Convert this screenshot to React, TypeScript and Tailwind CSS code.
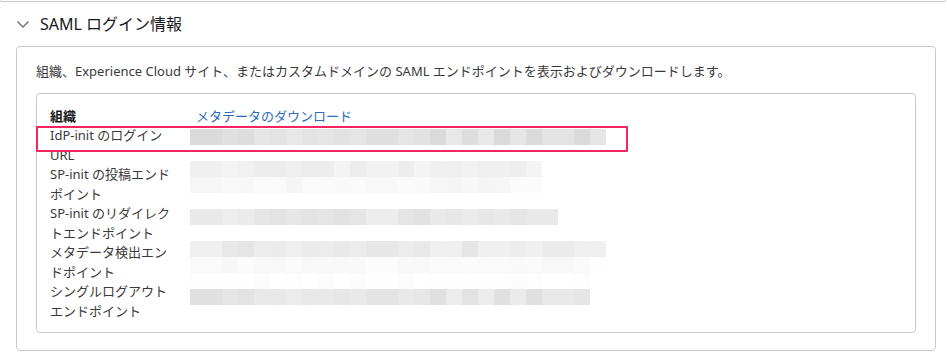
import React from "react";

const FONT = '"Noto Sans", "Noto Sans CJK JP", sans-serif';

const LABELS: string[][] = [
  ["IdP-init のログイン", "URL"],
  ["SP-init の投稿エンド", "ポイント"],
  ["SP-init のリダイレク", "トエンドポイント"],
  ["メタデータ検出エン", "ドポイント"],
  ["シングルログアウト", "エンドポイント"],
];

// redacted values: one row of 16px mosaic cells per entry [cells, base grey, spread]
const MOSAIC: [number, number, number][] = [
  [26, 218, 14],
  [0, 255, 0],
  [22, 236, 8],
  [22, 245, 6],
  [0, 255, 0],
  [23, 226, 12],
  [0, 255, 0],
  [26, 228, 12],
  [26, 247, 5],
  [26, 252, 3],
  [25, 224, 12],
];

function shade(r: number, c: number, base: number, spread: number) {
  const n = ((r * 37 + c * 53 + ((c * c) % 11) * 7) % 10) / 9;
  const v = Math.min(255, Math.round(base + n * spread));
  return `rgb(${v},${v},${v})`;
}

function Redacted() {
  return (
    <svg width={416} height={176} className="block">
      {MOSAIC.map(([cells, base, spread], r) =>
        Array.from({ length: cells }).map((_, c) => (
          <rect
            key={`${r}-${c}`}
            x={c * 16}
            y={r * 16}
            width={16}
            height={16}
            fill={c === cells - 1 ? shade(r, c, base + 6, spread / 2) : shade(r, c, base, spread)}
          />
        ))
      )}
    </svg>
  );
}

export default function App() {
  return (
    <div className="w-[947px] h-[357px] bg-white text-[#3a3a3a] overflow-hidden" style={{ fontFamily: FONT }}>
      <div className="w-[946px] h-[2px] border-x border-b border-[#c9c9c9] rounded-b-[4px]" />

      <div className="flex items-center h-[44px] pl-[16px] pb-[1px]">
        <svg width="14" height="14" viewBox="0 0 14 14" className="mr-[10px]">
          <path d="M1.5 4.5 L7 10 L12.5 4.5" fill="none" stroke="#706e6b" strokeWidth="1.4" />
        </svg>
        <span className="text-[16px] text-[#181818] leading-none">SAML ログイン情報</span>
      </div>

      <div className="ml-[16px] w-[920px] h-[305px] border border-[#c9c9c9] rounded-[4px] pt-[15px] pl-[19px] pr-[19px]">
        <p className="text-[13px] leading-[19.5px]">
          組織、Experience Cloud サイト、またはカスタムドメインの SAML エンドポイントを表示およびダウンロードします。
        </p>

        <div className="relative mt-[11px] h-[240px] border border-[#c9c9c9] rounded-[4px] pt-[13px] pl-[13px] text-[13px] leading-[19.5px]">
          <div className="flex">
            <div className="w-[140px] flex flex-col">
              <div className="font-bold text-[#181818]">組織</div>
              {LABELS.map((lines) => (
                <div key={lines[0]} className="whitespace-nowrap">
                  {lines.map((l) => (
                    <div key={l}>{l}</div>
                  ))}
                </div>
              ))}
            </div>
            <div className="flex flex-col">
              <a className="ml-[6px] text-[#2a6dc0] cursor-pointer">メタデータのダウンロード</a>
              <div className="mt-[3px]">
                <Redacted />
              </div>
            </div>
          </div>

          <div className="absolute left-[-1px] top-[32px] w-[592px] h-[26px] border-2 border-[#f5245f] rounded-[1px]" />
        </div>
      </div>
    </div>
  );
}
